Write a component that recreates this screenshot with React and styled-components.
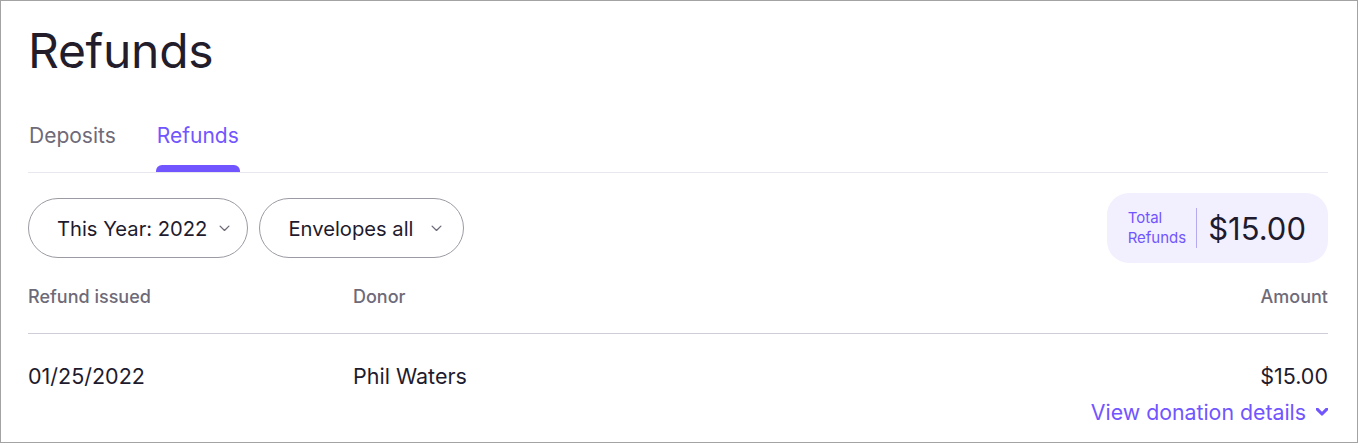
import React from 'react'
import styled, { createGlobalStyle } from 'styled-components'

const GlobalStyle = createGlobalStyle`
  html, body {
    margin: 0;
    padding: 0;
    background: #ffffff;
  }
  * {
    box-sizing: border-box;
  }
`

const Page = styled.div`
  height: 443px;
  border: 1px solid #a3a3a3;
  padding: 0 29px 0 27px;
  font-family: Inter, "Liberation Sans", sans-serif;
  color: #1f1b2e;
  overflow: hidden;
`

const Title = styled.h1`
  margin: 0;
  padding-top: 20px;
  font-size: 48px;
  line-height: 60px;
  font-weight: 400;
  letter-spacing: -0.3px;
  color: #221c2b;
`

const Tabs = styled.div`
  display: flex;
  gap: 39px;
  margin-top: 41px;
  border-bottom: 1px solid #e8e7ee;
`

const Tab = styled.div`
  position: relative;
  padding: 1px 1px 23px;
  font-size: 21px;
  line-height: 26px;
  color: ${p => (p.$active ? '#7155ff' : '#6e6a78')};

  &::after {
    content: '';
    display: ${p => (p.$active ? 'block' : 'none')};
    position: absolute;
    left: 0;
    right: 0;
    bottom: 0;
    height: 7px;
    background: #7155ff;
    border-radius: 6px 6px 0 0;
  }
`

const Toolbar = styled.div`
  display: flex;
  align-items: center;
  justify-content: space-between;
  margin-top: 20px;
`

const Filters = styled.div`
  display: flex;
  gap: 11px;
`

const Pill = styled.button`
  display: flex;
  align-items: center;
  gap: ${p => p.$gap || 12}px;
  height: 60px;
  padding: 0 ${p => p.$right || 17}px 0 28px;
  border: 1px solid #9d9aa3;
  border-radius: 30px;
  background: #fff;
  font-family: inherit;
  font-size: 20.2px;
  color: #1f1b2e;
  cursor: pointer;
`

const TotalBox = styled.div`
  display: flex;
  align-items: center;
  height: 70px;
  padding: 0 22px 0 21px;
  background: #f2f0fe;
  border-radius: 22px;
`

const TotalLabel = styled.div`
  font-size: 15px;
  line-height: 20px;
  color: #7155ff;
  padding-right: 10px;
  margin-right: 11px;
  border-right: 1px solid #b5aaf0;
`

const TotalValue = styled.div`
  font-size: 31px;
  color: #1f1b2e;
`

const HeaderRow = styled.div`
  display: grid;
  grid-template-columns: 325px 1fr auto;
  margin-top: 23px;
  padding-bottom: 25px;
  border-bottom: 1px solid #cfcdd8;
  font-size: 18px;
  line-height: 22px;
  font-weight: 500;
  color: #6e6a78;
`

const DataRow = styled.div`
  display: grid;
  grid-template-columns: 325px 1fr auto;
  padding-top: 29px;
  font-size: 21.5px;
  line-height: 26px;
  color: #1f1b2e;
`

const Right = styled.div`
  text-align: right;
`

const DetailsLink = styled.a`
  display: flex;
  justify-content: flex-end;
  align-items: center;
  gap: 10px;
  margin-top: 10px;
  font-size: 21.3px;
  line-height: 26px;
  color: #7155ff;
  text-decoration: none;
  cursor: pointer;
`

const Chevron = ({ size = 11, weight = 1.2, color = '#6e6a78' }) => (
  <svg width={size} height={size * 0.6} viewBox="0 0 10 6" fill="none">
    <path d="M1 1l4 4 4-4" stroke={color} strokeWidth={weight} strokeLinecap="round" strokeLinejoin="round" />
  </svg>
)

export default function App() {
  return (
    <>
      <GlobalStyle />
      <Page>
        <Title>Refunds</Title>
        <Tabs>
          <Tab>Deposits</Tab>
          <Tab $active>Refunds</Tab>
        </Tabs>
        <Toolbar>
          <Filters>
            <Pill>
              This Year: 2022
              <Chevron />
            </Pill>
            <Pill $gap={18} $right={21}>
              Envelopes all
              <Chevron />
            </Pill>
          </Filters>
          <TotalBox>
            <TotalLabel>
              Total
              <br />
              Refunds
            </TotalLabel>
            <TotalValue>$15.00</TotalValue>
          </TotalBox>
        </Toolbar>
        <HeaderRow>
          <div>Refund issued</div>
          <div>Donor</div>
          <Right>Amount</Right>
        </HeaderRow>
        <DataRow>
          <div>01/25/2022</div>
          <div>Phil Waters</div>
          <Right>$15.00</Right>
        </DataRow>
        <DetailsLink>
          View donation details
          <Chevron size={12} weight={2.6} color="#7155ff" />
        </DetailsLink>
      </Page>
    </>
  )
}
